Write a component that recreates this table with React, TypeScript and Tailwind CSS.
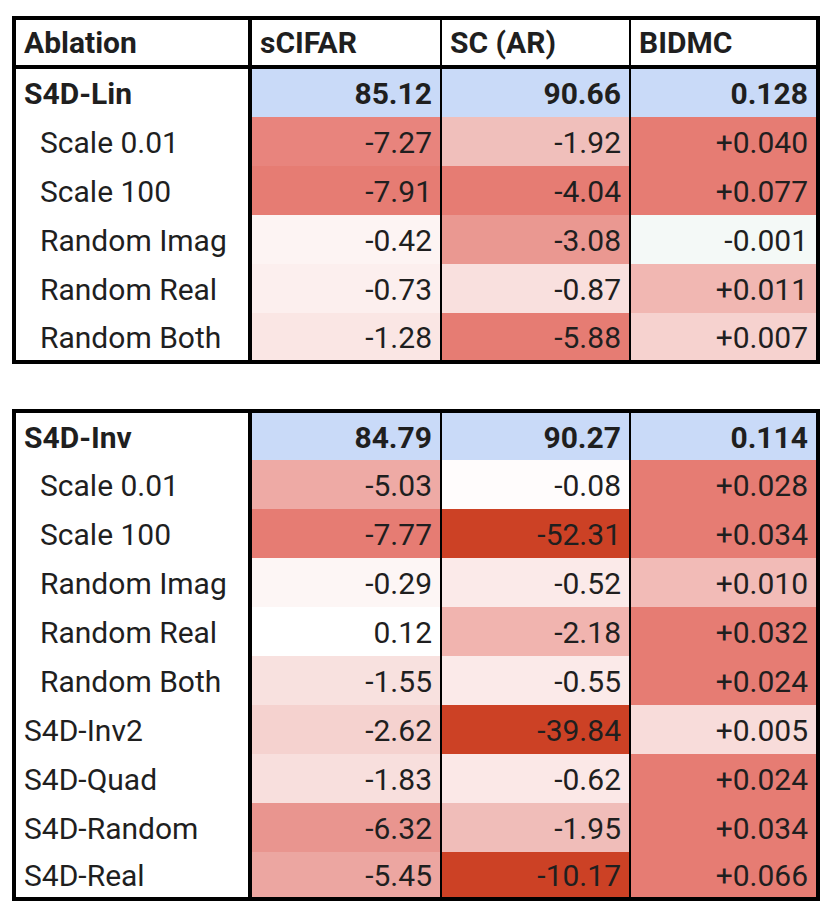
import React from 'react';

type Cell = { v: string; bg: string };
type Row = { label: string; kind: 'base' | 'sub' | 'top'; cells: Cell[]; h: string };

const BLUE = 'bg-[#c9daf8]';

const table1: Row[] = [
  {
    label: 'S4D-Lin',
    kind: 'base',
    h: 'h-[48px]',
    cells: [
      { v: '85.12', bg: BLUE },
      { v: '90.66', bg: BLUE },
      { v: '0.128', bg: BLUE }
    ]
  },
  {
    label: 'Scale 0.01',
    kind: 'sub',
    h: 'h-[49px]',
    cells: [
      { v: '-7.27', bg: 'bg-[#e8847d]' },
      { v: '-1.92', bg: 'bg-[#f0bfbb]' },
      { v: '+0.040', bg: 'bg-[#e67c73]' }
    ]
  },
  {
    label: 'Scale 100',
    kind: 'sub',
    h: 'h-[49px]',
    cells: [
      { v: '-7.91', bg: 'bg-[#e67c73]' },
      { v: '-4.04', bg: 'bg-[#e67c73]' },
      { v: '+0.077', bg: 'bg-[#e67c73]' }
    ]
  },
  {
    label: 'Random Imag',
    kind: 'sub',
    h: 'h-[49px]',
    cells: [
      { v: '-0.42', bg: 'bg-[#fdf4f3]' },
      { v: '-3.08', bg: 'bg-[#ea9891]' },
      { v: '-0.001', bg: 'bg-[#f4f9f7]' }
    ]
  },
  {
    label: 'Random Real',
    kind: 'sub',
    h: 'h-[49px]',
    cells: [
      { v: '-0.73', bg: 'bg-[#fcefee]' },
      { v: '-0.87', bg: 'bg-[#f9e0de]' },
      { v: '+0.011', bg: 'bg-[#f1b7b2]' }
    ]
  },
  {
    label: 'Random Both',
    kind: 'sub',
    h: 'h-[47px]',
    cells: [
      { v: '-1.28', bg: 'bg-[#fae6e4]' },
      { v: '-5.88', bg: 'bg-[#e67c73]' },
      { v: '+0.007', bg: 'bg-[#f6d2cf]' }
    ]
  }
];

const table2: Row[] = [
  {
    label: 'S4D-Inv',
    kind: 'base',
    h: 'h-[47px]',
    cells: [
      { v: '84.79', bg: BLUE },
      { v: '90.27', bg: BLUE },
      { v: '0.114', bg: BLUE }
    ]
  },
  {
    label: 'Scale 0.01',
    kind: 'sub',
    h: 'h-[49px]',
    cells: [
      { v: '-5.03', bg: 'bg-[#eeaaa5]' },
      { v: '-0.08', bg: 'bg-[#fffcfc]' },
      { v: '+0.028', bg: 'bg-[#e67c73]' }
    ]
  },
  {
    label: 'Scale 100',
    kind: 'sub',
    h: 'h-[49px]',
    cells: [
      { v: '-7.77', bg: 'bg-[#e67c73]' },
      { v: '-52.31', bg: 'bg-[#cc4125]' },
      { v: '+0.034', bg: 'bg-[#e67c73]' }
    ]
  },
  {
    label: 'Random Imag',
    kind: 'sub',
    h: 'h-[49px]',
    cells: [
      { v: '-0.29', bg: 'bg-[#fdf6f5]' },
      { v: '-0.52', bg: 'bg-[#fbeae9]' },
      { v: '+0.010', bg: 'bg-[#f2bbb7]' }
    ]
  },
  {
    label: 'Random Real',
    kind: 'sub',
    h: 'h-[49px]',
    cells: [
      { v: '0.12', bg: 'bg-white' },
      { v: '-2.18', bg: 'bg-[#f1b4af]' },
      { v: '+0.032', bg: 'bg-[#e67c73]' }
    ]
  },
  {
    label: 'Random Both',
    kind: 'sub',
    h: 'h-[49px]',
    cells: [
      { v: '-1.55', bg: 'bg-[#f8e1df]' },
      { v: '-0.55', bg: 'bg-[#fbeae9]' },
      { v: '+0.024', bg: 'bg-[#e67c73]' }
    ]
  },
  {
    label: 'S4D-Inv2',
    kind: 'top',
    h: 'h-[49px]',
    cells: [
      { v: '-2.62', bg: 'bg-[#f5d2cf]' },
      { v: '-39.84', bg: 'bg-[#cc4125]' },
      { v: '+0.005', bg: 'bg-[#f8dcda]' }
    ]
  },
  {
    label: 'S4D-Quad',
    kind: 'top',
    h: 'h-[49px]',
    cells: [
      { v: '-1.83', bg: 'bg-[#f8dfdd]' },
      { v: '-0.62', bg: 'bg-[#fbe8e7]' },
      { v: '+0.024', bg: 'bg-[#e67c73]' }
    ]
  },
  {
    label: 'S4D-Random',
    kind: 'top',
    h: 'h-[49px]',
    cells: [
      { v: '-6.32', bg: 'bg-[#e9958f]' },
      { v: '-1.95', bg: 'bg-[#f0bdb9]' },
      { v: '+0.034', bg: 'bg-[#e67c73]' }
    ]
  },
  {
    label: 'S4D-Real',
    kind: 'top',
    h: 'h-[45px]',
    cells: [
      { v: '-5.45', bg: 'bg-[#eca6a1]' },
      { v: '-10.17', bg: 'bg-[#cc4125]' },
      { v: '+0.066', bg: 'bg-[#e67c73]' }
    ]
  }
];

// widths of the three value columns (border included), and their left dividers
const colCls = [
  'w-[192px] border-l-4 border-black',
  'w-[189px] border-l-2 border-black',
  'w-[187px] border-l-2 border-black'
];

const DataRow: React.FC<{ row: Row }> = ({ row }) => {
  const labelCls =
    row.kind === 'base'
      ? 'pl-2 font-bold'
      : row.kind === 'sub'
        ? 'pl-[24px]'
        : 'pl-2';
  return (
    <div className={`flex ${row.h}`}>
      <div className={`flex w-[232px] items-center pt-[2px] ${labelCls}`}>
        {row.label}
      </div>
      {row.cells.map((c, i) => (
        <div
          key={i}
          className={`flex items-center justify-end pr-2 pt-[2px] ${colCls[i]} ${c.bg} ${
            row.kind === 'base' ? 'font-bold' : ''
          }`}
        >
          {c.v}
        </div>
      ))}
    </div>
  );
};

const Header: React.FC = () => {
  const heads = ['sCIFAR', 'SC (AR)', 'BIDMC'];
  return (
    <div className="flex h-[49px] border-b-4 border-black font-bold">
      <div className="flex w-[232px] items-center pl-2">Ablation</div>
      {heads.map((h, i) => (
        <div key={h} className={`flex items-center pl-2 ${colCls[i]}`}>
          {h}
        </div>
      ))}
    </div>
  );
};

export default function App() {
  return (
    <div className="min-h-[919px] bg-white pl-[12px] pt-[16px] font-['Roboto',sans-serif] text-[30px] leading-none text-[#1f1f1f]">
      <div className="w-[808px] border-4 border-black">
        <Header />
        {table1.map((r) => (
          <DataRow key={r.label} row={r} />
        ))}
      </div>
      <div className="mt-[45px] w-[808px] border-4 border-black">
        {table2.map((r) => (
          <DataRow key={r.label} row={r} />
        ))}
      </div>
    </div>
  );
}
